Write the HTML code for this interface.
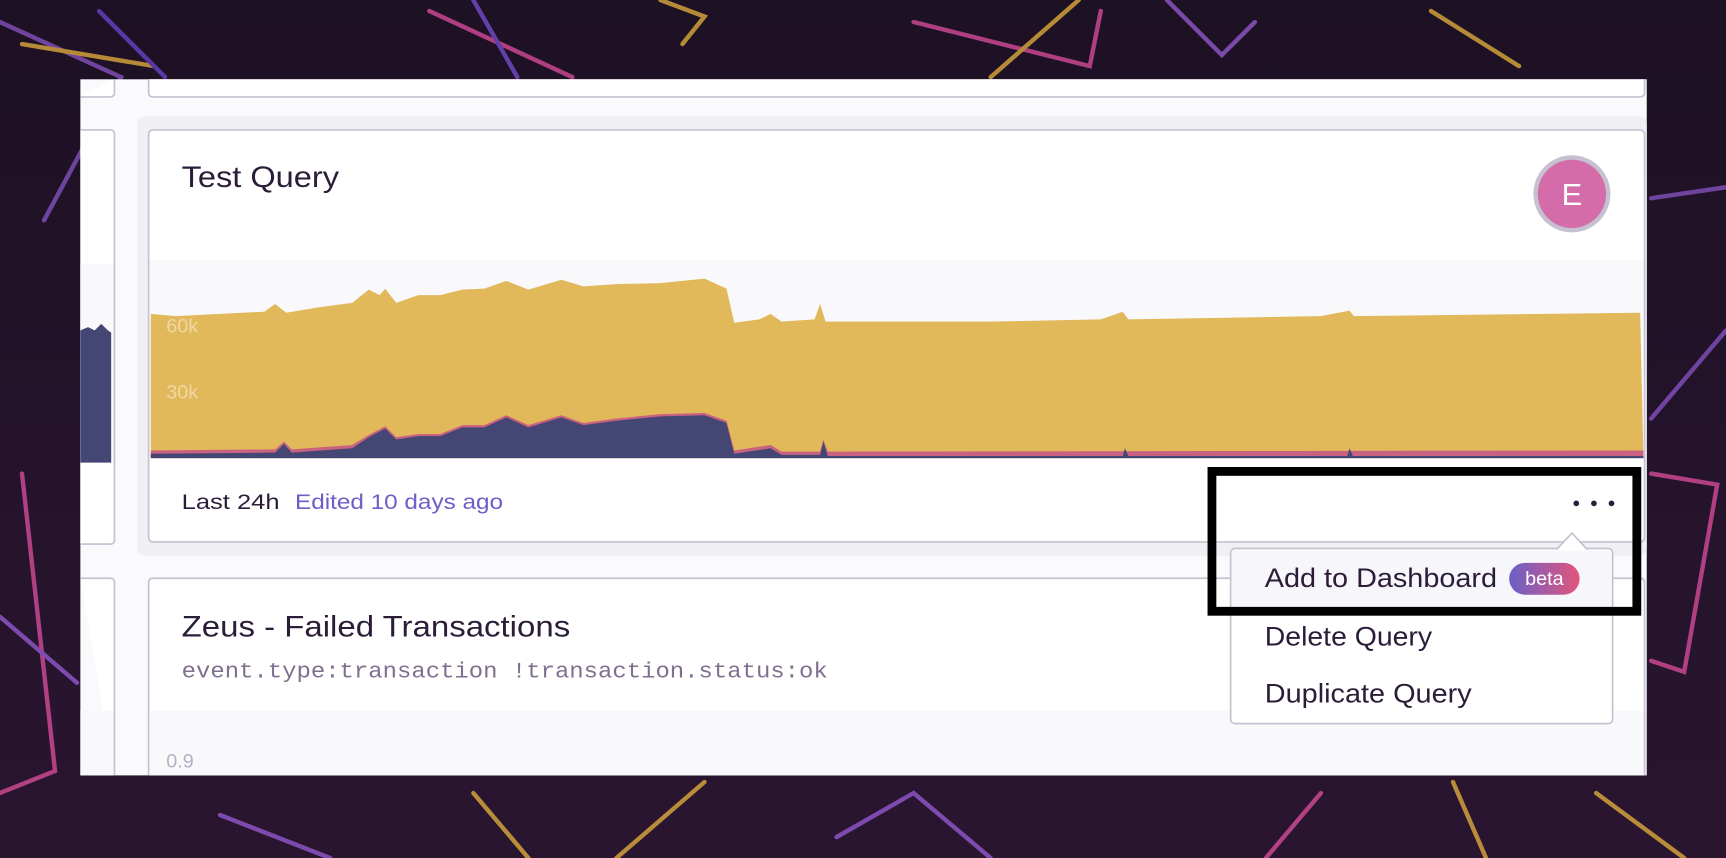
<!DOCTYPE html>
<html><head><meta charset="utf-8"><style>
html,body{margin:0;padding:0;background:#1e1226;overflow:hidden}
svg{display:block}
text{font-family:"Liberation Sans",sans-serif}
</style></head><body>
<svg width="1726" height="858" viewBox="0 0 1568 779" preserveAspectRatio="none" xmlns="http://www.w3.org/2000/svg">
<defs>
<linearGradient id="bg" x1="0" y1="0" x2="0" y2="1"><stop offset="0" stop-color="#1d1124"/><stop offset="1" stop-color="#2a1530"/></linearGradient>
<linearGradient id="beta" x1="0" y1="0" x2="1" y2="0"><stop offset="0" stop-color="#6c5fc7"/><stop offset="1" stop-color="#e1567c"/></linearGradient>
</defs>
<rect width="1568" height="779" fill="url(#bg)"/>
<g fill="none" stroke-width="4" stroke-linecap="round" opacity="0.75">
<path d="M0,20 L110,70 L40,200" stroke="#8a55c8"/>
<path d="M20,40 L140,60" stroke="#e9b43d"/>
<path d="M90,10 L150,70" stroke="#6b45d0"/>
<path d="M390,10 L520,70" stroke="#e04fa0"/>
<path d="M430,0 L470,70" stroke="#7b4fd6"/>
<path d="M600,0 L640,15 L620,40" stroke="#e9b43d"/>
<path d="M830,20 L990,60 L1000,10" stroke="#e04fa0"/>
<path d="M900,70 L980,0" stroke="#e9b43d"/>
<path d="M1060,0 L1110,50 L1140,20" stroke="#9a5ed8"/>
<path d="M1300,10 L1380,60" stroke="#e9b43d"/>
<path d="M20,430 L50,700 L0,720" stroke="#e04fa0"/>
<path d="M0,560 L70,620" stroke="#9a5ed8"/>
<path d="M1500,430 L1560,440 L1530,610 L1500,600" stroke="#e04fa0"/>
<path d="M1500,380 L1568,300" stroke="#8a55c8"/>
<path d="M1500,180 L1568,170" stroke="#8a55c8"/>
<path d="M430,720 L480,779" stroke="#e9b43d"/>
<path d="M560,779 L640,710" stroke="#e9b43d"/>
<path d="M760,760 L830,720 L900,779" stroke="#9a5ed8"/>
<path d="M1200,720 L1150,779" stroke="#e04fa0"/>
<path d="M1320,710 L1350,779" stroke="#e9b43d"/>
<path d="M1450,720 L1530,779" stroke="#e9b43d"/>
<path d="M200,740 L300,779" stroke="#9a5ed8"/>
</g>
<rect x="73" y="72" width="1423" height="632" fill="#fafafc"/>
<rect x="125" y="105" width="1371" height="400" rx="8" fill="#f0eff4"/>
<path d="M135,72 L135,84 Q135,88 139,88 L1490,88 Q1494,88 1494,84 L1494,72" fill="#fff" stroke="#c6c0d0" stroke-width="1.5"/>
<path d="M73,88 L100,88 Q104,88 104,84 L104,72" fill="#fff" stroke="#c6c0d0" stroke-width="1.5"/>
<path d="M73,118 L100,118 Q104,118 104,122 L104,490 Q104,494 100,494 L73,494" fill="#fff" stroke="#c6c0d0" stroke-width="1.5"/>
<rect x="73" y="240" width="30" height="180" fill="#f9f8fb"/>
<path d="M73,420 L73,300 L80,297 L86,300 L92,294 L98,300 L101,302 L101,420Z" fill="#444674"/>
<rect x="135" y="118" width="1359" height="374" rx="4" fill="#fff" stroke="#c6c0d0" stroke-width="1.5"/>
<text x="165" y="170" font-size="27" fill="#2b1d38" textLength="143" lengthAdjust="spacingAndGlyphs">Test Query</text>
<circle cx="1428" cy="176" r="35" fill="#c6c0d0"/>
<circle cx="1428" cy="176" r="31" fill="#d36ca8"/>
<text x="1428" y="186" font-size="28" fill="#fff" text-anchor="middle">E</text>
<rect x="136" y="236" width="1357" height="180" fill="#f9f8fb"/>
<path d="M137,416 L137,285 L160,287 L200,285 L240,283 L250,276 L260,284 L290,279 L320,275 L335,263 L345,268 L350,262 L360,275 L380,268 L400,268 L420,263 L440,262 L460,255 L480,263 L510,254 L530,260 L560,258 L600,257 L640,253 L660,262 L667,293 L690,290 L700,285 L710,292 L740,290 L745,276 L750,292 L900,292 L1000,290 L1020,283 L1025,290 L1200,287 L1226,282 L1230,287 L1490,284 L1493,416 Z" fill="#e1b85a"/>
<path d="M137,416 L137,409 L250,408 L258,401 L265,408 L320,404 L335,395 L350,387 L360,397 L380,394 L400,394 L420,386 L440,386 L460,377 L480,386 L510,377 L530,384 L560,380 L600,376 L640,375 L660,382 L667,409 L700,404 L710,410 L745,410 L748,399 L752,410 L1493,409 L1493,416 Z" fill="#c96180"/>
<path d="M137,416 L137,412 L250,411 L258,403 L265,411 L320,407 L335,397 L350,389 L360,399 L380,396 L400,396 L420,388 L440,388 L460,379 L480,388 L510,379 L530,386 L560,382 L600,378 L640,377 L660,384 L667,412 L700,407 L710,413 L745,413 L748,401 L752,414 L1020,414 L1022,407 L1025,414 L1224,414 L1226,407 L1229,414 L1493,414 L1493,416 Z" fill="#444674"/>
<text x="151" y="302" font-size="18" fill="#fff" opacity="0.45">60k</text>
<text x="151" y="362" font-size="18" fill="#fff" opacity="0.45">30k</text>
<text x="165" y="462" font-size="19" fill="#2b1d38" textLength="89" lengthAdjust="spacingAndGlyphs">Last 24h</text>
<text x="268" y="462" font-size="19" fill="#6c5fc7" textLength="189" lengthAdjust="spacingAndGlyphs">Edited 10 days ago</text>
<path d="M135,704 L135,529 Q135,525 139,525 L1490,525 Q1494,525 1494,529 L1494,704" fill="#fff" stroke="#c6c0d0" stroke-width="1.5"/>
<path d="M73,525 L100,525 Q104,525 104,529 L104,704" fill="#fff" stroke="#c6c0d0" stroke-width="1.5"/>
<rect x="136" y="645" width="1357" height="59" fill="#f9f8fb"/>
<rect x="73" y="645" width="30" height="59" fill="#f9f8fb"/>
<text x="165" y="578" font-size="27" fill="#2b1d38" textLength="353" lengthAdjust="spacingAndGlyphs">Zeus - Failed Transactions</text>
<text x="165" y="615" font-size="20" fill="#80708f" style="font-family:'Liberation Mono',monospace" textLength="587" lengthAdjust="spacingAndGlyphs">event.type:transaction !transaction.status:ok</text>
<text x="151" y="697" font-size="18" fill="#b8b0c4">0.9</text>
<circle cx="1432" cy="457" r="2.6" fill="#2b1d38"/><circle cx="1448" cy="457" r="2.6" fill="#2b1d38"/><circle cx="1464" cy="457" r="2.6" fill="#2b1d38"/>
<rect x="1118" y="498" width="347" height="159" rx="4" fill="#fff" stroke="#c6c0d0" stroke-width="1.5"/>
<path d="M1414,499 L1428,484 L1442,499" fill="#fff" stroke="#c6c0d0" stroke-width="1.5"/>
<rect x="1119" y="500" width="345" height="52" fill="#f7f6fa"/>
<text x="1149" y="533" font-size="24" fill="#2b1d38" textLength="211" lengthAdjust="spacingAndGlyphs">Add to Dashboard</text>
<rect x="1371" y="511" width="64" height="29" rx="14.5" fill="url(#beta)"/>
<text x="1403" y="531" font-size="18" fill="#fff" text-anchor="middle">beta</text>
<text x="1149" y="586" font-size="24" fill="#2b1d38" textLength="152" lengthAdjust="spacingAndGlyphs">Delete Query</text>
<text x="1149" y="638" font-size="24" fill="#2b1d38" textLength="188" lengthAdjust="spacingAndGlyphs">Duplicate Query</text>
<rect x="1101" y="428" width="386" height="127" fill="none" stroke="#000" stroke-width="8"/>
</svg>
</body></html>
